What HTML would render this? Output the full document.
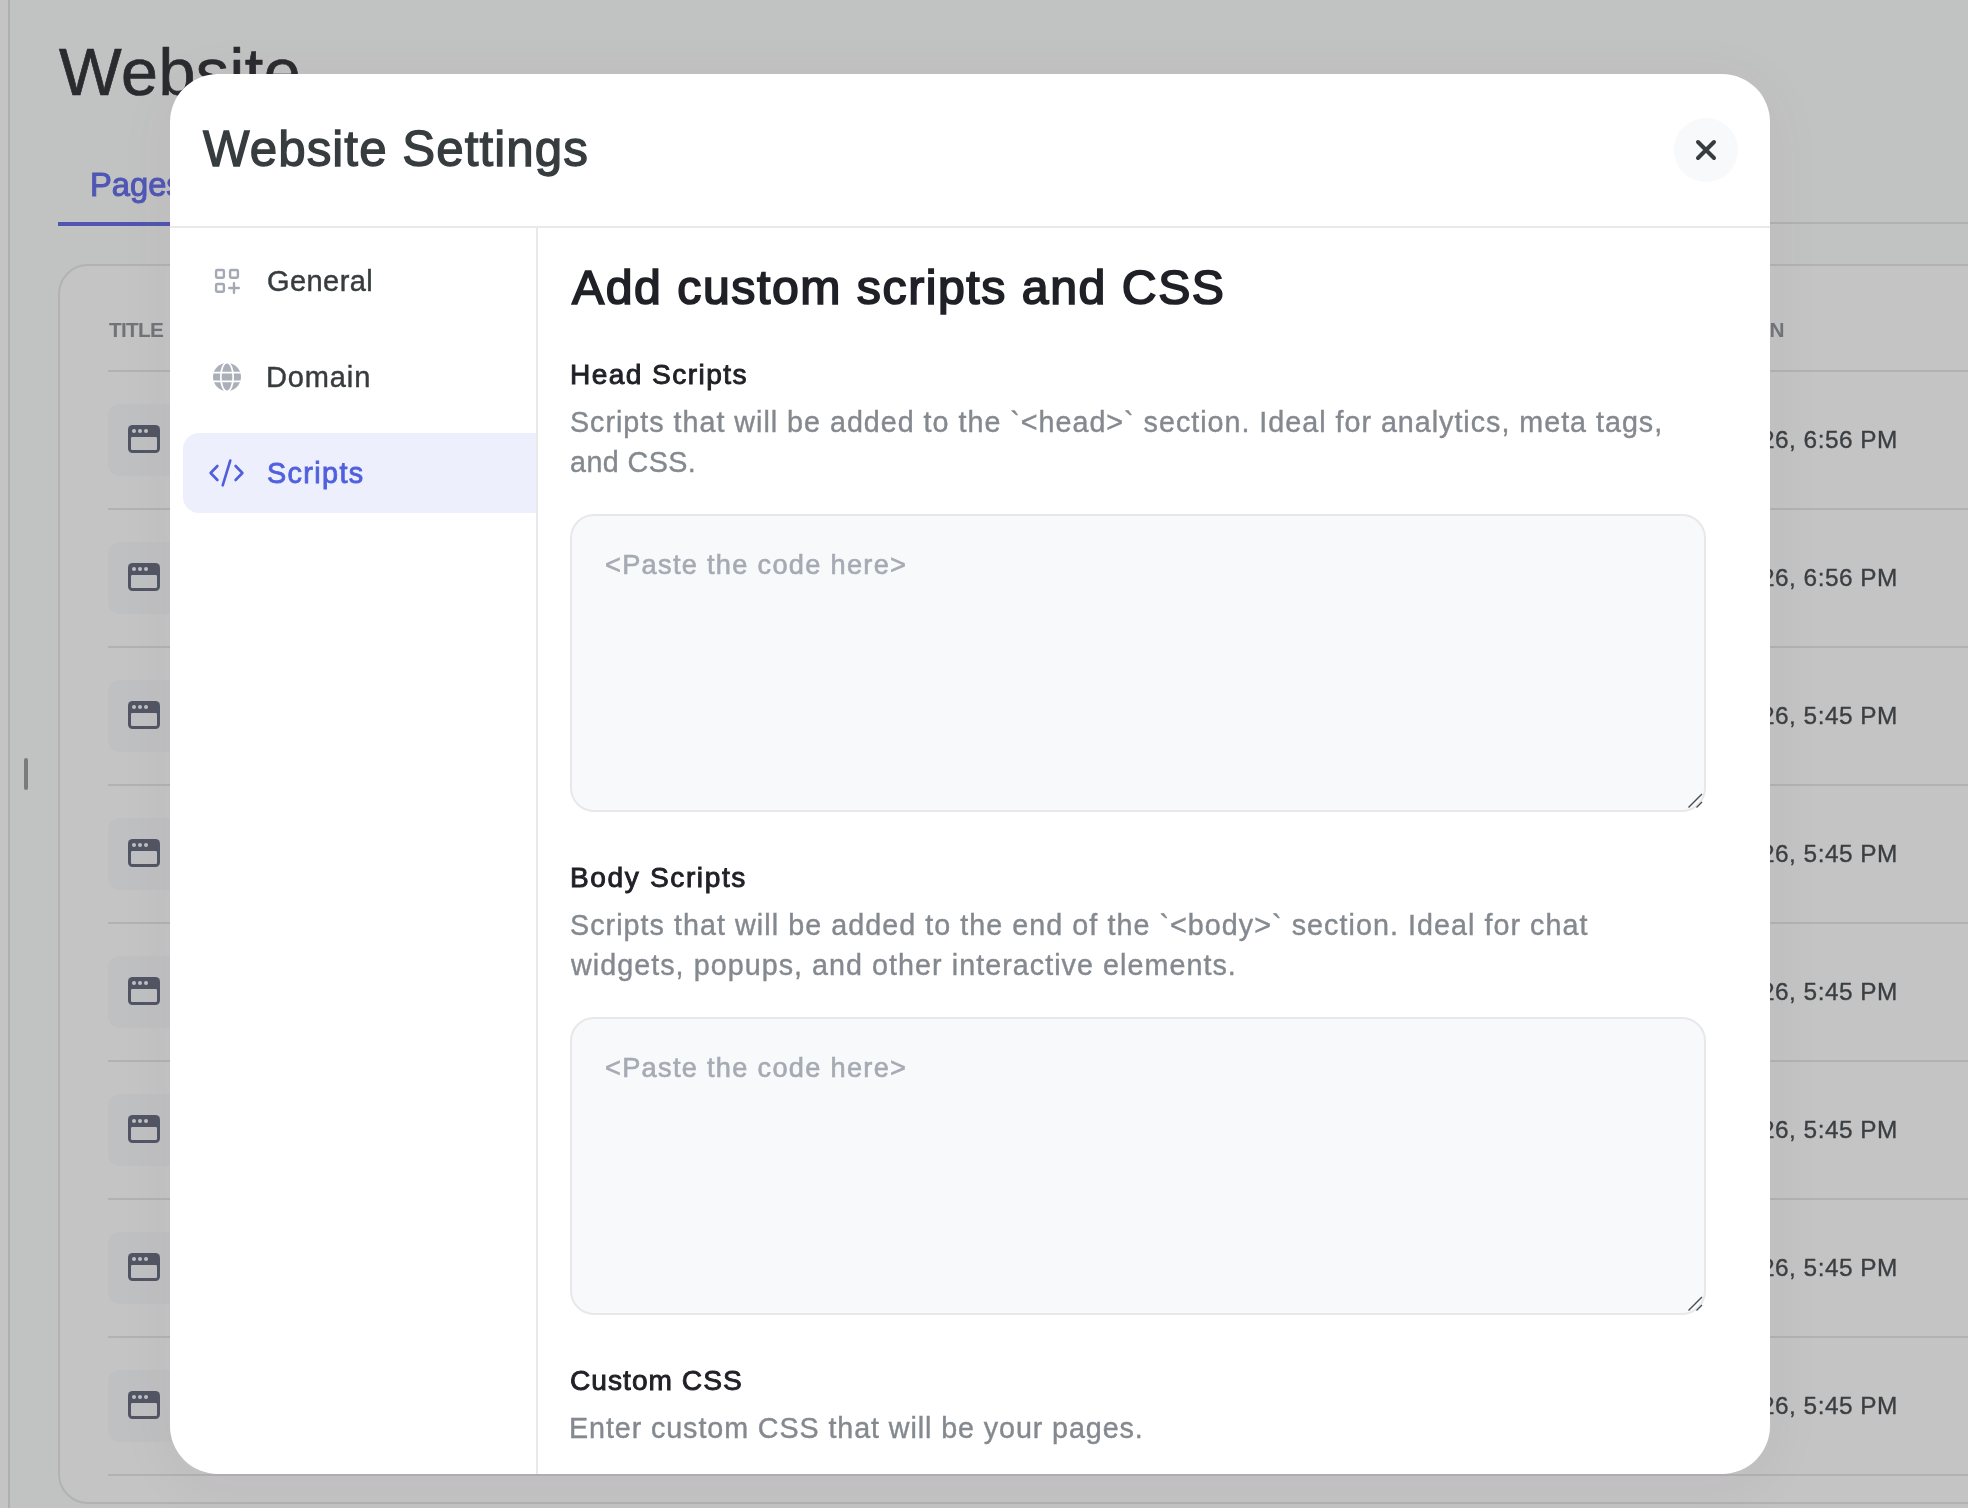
<!DOCTYPE html>
<html lang="en"><head><meta charset="utf-8"><title>Website Settings</title>
<style>
*{box-sizing:border-box;margin:0;padding:0}
html,body{width:1968px;height:1508px;overflow:hidden}
body{position:relative;background:#c1c3c2;font-family:"Liberation Sans",sans-serif;-webkit-font-smoothing:antialiased}
#bg,#modal{position:absolute;left:0;top:0;width:1968px;height:1508px;overflow:hidden}
#modal{background:#fff;clip-path:inset(74px 198px 34px 170px round 48px)}
.t{will-change:transform;position:absolute;white-space:nowrap;line-height:1;font-family:"Liberation Sans",sans-serif}
.a{position:absolute}
svg{position:absolute;left:0;top:0;overflow:visible}
.sep{position:absolute;left:108px;width:1900px;height:2px;background:#b2b2b3}
.ibox{position:absolute;left:108px;width:72px;height:72px;border-radius:12px;background:#bfc0c2}
.ta{position:absolute;left:570px;width:1136px;height:298px;border:2px solid #e8e8ea;border-radius:24px;background:#f8f9fb}

</style></head>
<body>
<div id="bg">
<div class="a" style="left:0;top:0;width:8px;height:1508px;background:#c4c4c4"></div>
<div class="a" style="left:8px;top:0;width:2px;height:1508px;background:#afafaf"></div>
<div class="a" style="left:24px;top:758px;width:4px;height:32px;border-radius:2px;background:#7b7b7b"></div>
<div class="a" style="left:58px;top:222px;width:1910px;height:2px;background:#b0b1b1"></div>
<div class="a" style="left:58px;top:222px;width:150px;height:4px;background:#5056b0"></div>
<div class="a" style="left:58px;top:264px;width:2000px;height:1240px;border:2px solid #b2b2b3;border-radius:30px;background:#c4c4c5"></div>
<div class="sep" style="top:370px"></div>
<div class="sep" style="top:508px"></div>
<div class="sep" style="top:646px"></div>
<div class="sep" style="top:784px"></div>
<div class="sep" style="top:922px"></div>
<div class="sep" style="top:1060px"></div>
<div class="sep" style="top:1198px"></div>
<div class="sep" style="top:1336px"></div>
<div class="sep" style="top:1474px"></div>
<div class="ibox" style="top:404px"></div>
<div class="ibox" style="top:542px"></div>
<div class="ibox" style="top:680px"></div>
<div class="ibox" style="top:818px"></div>
<div class="ibox" style="top:956px"></div>
<div class="ibox" style="top:1094px"></div>
<div class="ibox" style="top:1232px"></div>
<div class="ibox" style="top:1370px"></div>
<svg width="1968" height="1508" viewBox="0 0 1968 1508"><g transform="translate(0,0)"><rect x="128" y="425" width="32" height="28" rx="4.5" fill="#525664"/><rect x="131" y="437" width="26" height="13" rx="1.2" fill="#bfc0c2"/><circle cx="134" cy="431" r="2" fill="#bfc0c2"/><circle cx="140" cy="431" r="2" fill="#bfc0c2"/><circle cx="146" cy="431" r="2" fill="#bfc0c2"/></g><g transform="translate(0,138)"><rect x="128" y="425" width="32" height="28" rx="4.5" fill="#525664"/><rect x="131" y="437" width="26" height="13" rx="1.2" fill="#bfc0c2"/><circle cx="134" cy="431" r="2" fill="#bfc0c2"/><circle cx="140" cy="431" r="2" fill="#bfc0c2"/><circle cx="146" cy="431" r="2" fill="#bfc0c2"/></g><g transform="translate(0,276)"><rect x="128" y="425" width="32" height="28" rx="4.5" fill="#525664"/><rect x="131" y="437" width="26" height="13" rx="1.2" fill="#bfc0c2"/><circle cx="134" cy="431" r="2" fill="#bfc0c2"/><circle cx="140" cy="431" r="2" fill="#bfc0c2"/><circle cx="146" cy="431" r="2" fill="#bfc0c2"/></g><g transform="translate(0,414)"><rect x="128" y="425" width="32" height="28" rx="4.5" fill="#525664"/><rect x="131" y="437" width="26" height="13" rx="1.2" fill="#bfc0c2"/><circle cx="134" cy="431" r="2" fill="#bfc0c2"/><circle cx="140" cy="431" r="2" fill="#bfc0c2"/><circle cx="146" cy="431" r="2" fill="#bfc0c2"/></g><g transform="translate(0,552)"><rect x="128" y="425" width="32" height="28" rx="4.5" fill="#525664"/><rect x="131" y="437" width="26" height="13" rx="1.2" fill="#bfc0c2"/><circle cx="134" cy="431" r="2" fill="#bfc0c2"/><circle cx="140" cy="431" r="2" fill="#bfc0c2"/><circle cx="146" cy="431" r="2" fill="#bfc0c2"/></g><g transform="translate(0,690)"><rect x="128" y="425" width="32" height="28" rx="4.5" fill="#525664"/><rect x="131" y="437" width="26" height="13" rx="1.2" fill="#bfc0c2"/><circle cx="134" cy="431" r="2" fill="#bfc0c2"/><circle cx="140" cy="431" r="2" fill="#bfc0c2"/><circle cx="146" cy="431" r="2" fill="#bfc0c2"/></g><g transform="translate(0,828)"><rect x="128" y="425" width="32" height="28" rx="4.5" fill="#525664"/><rect x="131" y="437" width="26" height="13" rx="1.2" fill="#bfc0c2"/><circle cx="134" cy="431" r="2" fill="#bfc0c2"/><circle cx="140" cy="431" r="2" fill="#bfc0c2"/><circle cx="146" cy="431" r="2" fill="#bfc0c2"/></g><g transform="translate(0,966)"><rect x="128" y="425" width="32" height="28" rx="4.5" fill="#525664"/><rect x="131" y="437" width="26" height="13" rx="1.2" fill="#bfc0c2"/><circle cx="134" cy="431" r="2" fill="#bfc0c2"/><circle cx="140" cy="431" r="2" fill="#bfc0c2"/><circle cx="146" cy="431" r="2" fill="#bfc0c2"/></g></svg>
<div class="a" style="left:170px;top:74px;width:1600px;height:1400px;border-radius:48px;box-shadow:0 8px 60px 4px rgba(100,20,55,0.042)"></div>
<div class="t" id="bgtitle" style="font-size:66.4px;font-weight:400;color:#2a2a2f;top:39.00px;letter-spacing:0.500px;left:59.00px;-webkit-text-stroke:0.7px #2a2a2f;">Website</div>
<div class="t" id="pages" style="font-size:32.7px;font-weight:400;color:#5056b4;top:169.00px;letter-spacing:0.000px;left:90.00px;-webkit-text-stroke:1.0px #5056b4;">Pages</div>
<div class="t" id="th_title" style="font-size:20.8px;font-weight:700;color:#707378;top:320.00px;letter-spacing:-0.712px;left:109.00px;">TITLE</div>
<div class="t" id="th_n" style="font-size:20.8px;font-weight:700;color:#707378;top:320.00px;letter-spacing:-0.400px;right:184.40px;">LAST UPDATED ON</div>
<div class="t" id="time0" style="font-size:24.4px;font-weight:400;color:#3b3f42;top:428.00px;letter-spacing:0.500px;right:70.00px;-webkit-text-stroke:0.35px #3b3f42;">Jan 12, 2026, 6:56 PM</div>
<div class="t" id="time1" style="font-size:24.4px;font-weight:400;color:#3b3f42;top:566.00px;letter-spacing:0.500px;right:70.00px;-webkit-text-stroke:0.35px #3b3f42;">Jan 12, 2026, 6:56 PM</div>
<div class="t" id="time2" style="font-size:24.4px;font-weight:400;color:#3b3f42;top:704.00px;letter-spacing:0.500px;right:70.00px;-webkit-text-stroke:0.35px #3b3f42;">Jan 12, 2026, 5:45 PM</div>
<div class="t" id="time3" style="font-size:24.4px;font-weight:400;color:#3b3f42;top:842.00px;letter-spacing:0.500px;right:70.00px;-webkit-text-stroke:0.35px #3b3f42;">Jan 12, 2026, 5:45 PM</div>
<div class="t" id="time4" style="font-size:24.4px;font-weight:400;color:#3b3f42;top:980.00px;letter-spacing:0.500px;right:70.00px;-webkit-text-stroke:0.35px #3b3f42;">Jan 12, 2026, 5:45 PM</div>
<div class="t" id="time5" style="font-size:24.4px;font-weight:400;color:#3b3f42;top:1118.00px;letter-spacing:0.500px;right:70.00px;-webkit-text-stroke:0.35px #3b3f42;">Jan 12, 2026, 5:45 PM</div>
<div class="t" id="time6" style="font-size:24.4px;font-weight:400;color:#3b3f42;top:1256.00px;letter-spacing:0.500px;right:70.00px;-webkit-text-stroke:0.35px #3b3f42;">Jan 12, 2026, 5:45 PM</div>
<div class="t" id="time7" style="font-size:24.4px;font-weight:400;color:#3b3f42;top:1394.00px;letter-spacing:0.500px;right:70.00px;-webkit-text-stroke:0.35px #3b3f42;">Jan 12, 2026, 5:45 PM</div>
</div>
<div id="modal">
<div class="a" style="left:170px;top:226px;width:1600px;height:2px;background:#e9e9eb"></div>
<div class="a" style="left:536px;top:228px;width:2px;height:1260px;background:#e9e9eb"></div>
<div class="a" style="left:183px;top:433px;width:353px;height:80px;border-radius:16px 0 0 16px;background:#edeffc"></div>
<div class="a" style="left:1674px;top:118px;width:64px;height:64px;border-radius:32px;background:#f8f9fa"></div>
<div class="ta" style="top:514px"></div>
<div class="ta" style="top:1017px"></div>
<svg width="1968" height="1508" viewBox="0 0 1968 1508" fill="none"><path d="M1698 142L1714 158M1714 142L1698 158" stroke="#373c3f" stroke-width="4" stroke-linecap="round"/><g stroke="#a4a9b3" stroke-width="2.4" stroke-linecap="round" stroke-linejoin="round"><rect x="216.1" y="270" width="7.8" height="7.8" rx="1.2"/><rect x="230.1" y="270" width="7.8" height="7.8" rx="1.2"/><rect x="216.1" y="284" width="7.8" height="7.8" rx="1.2"/><path d="M229.2 288H238.8M234 283.2V292.8"/></g><circle cx="227" cy="377" r="14" fill="#aaafb9"/><g stroke="#fff" stroke-width="1.7"><path d="M212 372.6H242M212 381.4H242"/><ellipse cx="227" cy="377" rx="6.2" ry="14.4"/></g><path d="M217.4 466L210.6 473L217.4 480M235.6 466L242.4 473L235.6 480M230.3 460.5L222.7 485.3" stroke="#4f5fdb" stroke-width="2.6" stroke-linecap="round" stroke-linejoin="round"/><path d="M1688.5 807.5L1702 794M1696.5 807.5L1702 802" stroke="#4a4d50" stroke-width="1.4"/><path d="M1688.5 1310.5L1702 1297M1696.5 1310.5L1702 1305" stroke="#4a4d50" stroke-width="1.4"/></svg>
<div class="t" id="mtitle" style="font-size:49.3px;font-weight:400;color:#373c3e;top:124.00px;letter-spacing:1.060px;left:203.00px;-webkit-text-stroke:1.3px #373c3e;">Website Settings</div>
<div class="t" id="nav0" style="font-size:29.0px;font-weight:400;color:#373c3e;top:267.00px;letter-spacing:0.425px;left:267.00px;-webkit-text-stroke:0.45px #373c3e;">General</div>
<div class="t" id="nav1" style="font-size:29.0px;font-weight:400;color:#373c3e;top:363.00px;letter-spacing:0.870px;left:266.00px;-webkit-text-stroke:0.45px #373c3e;">Domain</div>
<div class="t" id="nav2" style="font-size:28.8px;font-weight:400;color:#5060dd;top:459.00px;letter-spacing:1.367px;left:267.00px;-webkit-text-stroke:0.85px #5060dd;">Scripts</div>
<div class="t" id="h1" style="font-size:48.2px;font-weight:400;color:#202027;top:263.00px;letter-spacing:1.548px;left:572.00px;-webkit-text-stroke:1.7px #202027;">Add custom scripts and CSS</div>
<div class="t" id="lab0" style="font-size:28.1px;font-weight:400;color:#202027;top:361.00px;letter-spacing:1.427px;left:570.00px;-webkit-text-stroke:0.9px #202027;">Head Scripts</div>
<div class="t" id="d0a" style="font-size:28.7px;font-weight:400;color:#84898f;top:408.00px;letter-spacing:0.990px;left:570.00px;-webkit-text-stroke:0.4px #84898f;">Scripts that will be added to the `&lt;head&gt;` section. Ideal for analytics, meta tags,</div>
<div class="t" id="d0b" style="font-size:28.7px;font-weight:400;color:#84898f;top:448.00px;letter-spacing:0.436px;left:570.00px;-webkit-text-stroke:0.4px #84898f;">and CSS.</div>
<div class="t" id="ph0" style="font-size:27.2px;font-weight:400;color:#a5aab3;top:551.00px;letter-spacing:1.292px;left:605.00px;-webkit-text-stroke:0.6px #a5aab3;">&lt;Paste the code here&gt;</div>
<div class="t" id="lab1" style="font-size:28.1px;font-weight:400;color:#202027;top:864.00px;letter-spacing:1.609px;left:570.00px;-webkit-text-stroke:0.9px #202027;">Body Scripts</div>
<div class="t" id="d1a" style="font-size:28.7px;font-weight:400;color:#84898f;top:911.00px;letter-spacing:1.049px;left:570.00px;-webkit-text-stroke:0.4px #84898f;">Scripts that will be added to the end of the `&lt;body&gt;` section. Ideal for chat</div>
<div class="t" id="d1b" style="font-size:28.7px;font-weight:400;color:#84898f;top:951.00px;letter-spacing:1.047px;left:571.00px;-webkit-text-stroke:0.4px #84898f;">widgets, popups, and other interactive elements.</div>
<div class="t" id="ph1" style="font-size:27.2px;font-weight:400;color:#a5aab3;top:1054.00px;letter-spacing:1.292px;left:605.00px;-webkit-text-stroke:0.6px #a5aab3;">&lt;Paste the code here&gt;</div>
<div class="t" id="lab2" style="font-size:28.1px;font-weight:400;color:#202027;top:1367.00px;letter-spacing:1.039px;left:570.00px;-webkit-text-stroke:0.9px #202027;">Custom CSS</div>
<div class="t" id="d2a" style="font-size:28.7px;font-weight:400;color:#84898f;top:1414.00px;letter-spacing:0.911px;left:569.00px;-webkit-text-stroke:0.4px #84898f;">Enter custom CSS that will be your pages.</div>
</div>
</body></html>
